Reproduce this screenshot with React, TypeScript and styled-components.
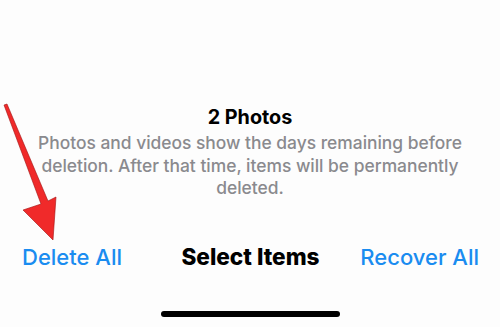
import React from "react";
import styled, { createGlobalStyle } from "styled-components";

const Global = createGlobalStyle`
  html, body { margin: 0; padding: 0; background: #fdfdfd; }
  body { font-family: Inter, "Noto Sans", "Liberation Sans", sans-serif; }
`;

const Screen = styled.div`
  position: relative;
  width: 500px;
  height: 327px;
  background: #fdfdfd;
  display: flex;
  flex-direction: column;
  align-items: center;
  overflow: hidden;
`;

const Info = styled.div`
  margin-top: 105px;
  width: 440px;
  display: flex;
  flex-direction: column;
  align-items: center;
  text-align: center;
`;

const Title = styled.div`
  font-size: 19.8px;
  font-weight: 700;
  color: #000;
  line-height: 24px;
`;

const Desc = styled.div`
  margin-top: 3px;
  font-size: 17.4px;
  font-weight: 500;
  color: #8a8a8e;
  line-height: 22.5px;
`;

const Toolbar = styled.div`
  margin-top: 43px;
  width: 100%;
  box-sizing: border-box;
  padding: 0 21px 0 22px;
  display: grid;
  grid-template-columns: 1fr auto 1fr;
  align-items: center;
`;

const Action = styled.div<{ $align?: "left" | "right" }>`
  font-size: 22px;
  line-height: 28px;
  font-weight: 500;
  color: #1a8cf0;
  text-align: ${(p) => p.$align ?? "left"};
`;

const ToolbarTitle = styled.div`
  font-size: 22.6px;
  line-height: 28px;
  font-weight: 800;
  color: #000;
  text-align: center;
`;

const HomeIndicator = styled.div`
  margin-top: auto;
  margin-bottom: 10px;
  width: 179px;
  height: 6px;
  border-radius: 3px;
  background: #000;
`;

const ArrowSvg = styled.svg`
  position: absolute;
  left: 0;
  top: 95px;
`;

export default function App() {
  return (
    <>
      <Global />
      <Screen>
        <Info>
          <Title>2 Photos</Title>
          <Desc>
            Photos and videos show the days remaining before deletion. After
            that time, items will be permanently deleted.
          </Desc>
        </Info>
        <Toolbar>
          <Action $align="left">Delete All</Action>
          <ToolbarTitle>Select Items</ToolbarTitle>
          <Action $align="right">Recover All</Action>
        </Toolbar>
        <HomeIndicator />
        <ArrowSvg width="70" height="150" viewBox="0 0 70 150">
          <path
            d="M4 10 L7 9 L48 106 L56 102 L53 145 L23 115 L41 109 Z"
            fill="#f02a2a"
            stroke="#a01010"
            strokeWidth="0.6"
          />
        </ArrowSvg>
      </Screen>
    </>
  );
}
